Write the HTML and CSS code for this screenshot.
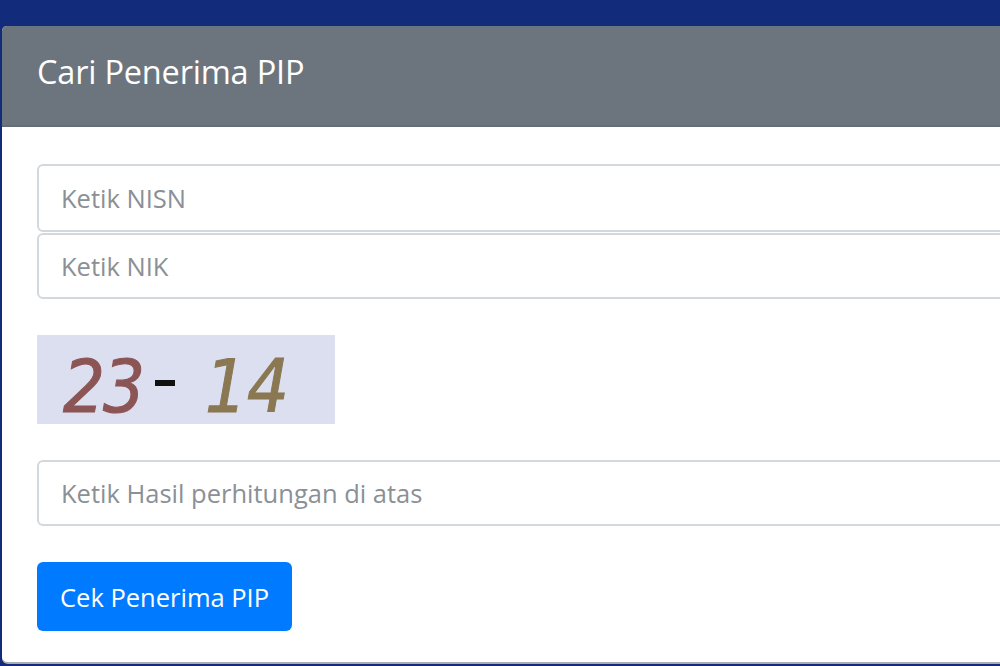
FILE: index.html
```html
<!DOCTYPE html>
<html lang="id">
<head>
  <meta charset="UTF-8" />
  <meta name="viewport" content="width=device-width, initial-scale=1.0" />
  <title>Cari Penerima PIP</title>
  <link rel="stylesheet" href="styles.css">
</head>
<body>

  <div class="topbar"></div>

  <div class="card">
    <div class="card-header">
      <h3>Cari Penerima PIP</h3>
    </div>

    <div class="card-body">
      <form class="search-form" onsubmit="return false;">
        <div class="field-group">
          <input type="text" class="form-control" placeholder="Ketik NISN">
          <input type="text" class="form-control" placeholder="Ketik NIK">
        </div>

        <div class="captcha">
          <span class="num num-a">23</span>
          <span class="minus"></span>
          <span class="num num-b">14</span>
        </div>

        <input type="text" class="form-control" placeholder="Ketik Hasil perhitungan di atas">

        <div>
          <button type="submit" class="btn-primary">Cek Penerima PIP</button>
        </div>
      </form>
    </div>
  </div>

</body>
</html>
```

FILE: styles.css
```css
html, body {
  height: 100%;
}

body {
  margin: 0;
  overflow: hidden;
  background: #132b7b;
  font-family: 'Open Sans', 'Lato', sans-serif;
  color: #212529;
}

.topbar {
  height: 26px;
  background: #132b7b;
}

.card {
  margin-left: 2px;
  height: 638px;
  box-sizing: border-box;
  background: #fff;
  border-bottom: 2px solid #a9adb3;
  border-radius: 5px 0 0 6px;
  overflow: hidden;
  display: flex;
  flex-direction: column;
}

.card-header {
  height: 101px;
  box-sizing: border-box;
  background: #6c757d;
  border-bottom: 2px solid #656c74;
  padding-left: 35px;
  display: flex;
  align-items: center;
}

.card-header h3 {
  margin: 0;
  color: #fff;
  font-weight: 400;
  font-size: 32.5px;
  letter-spacing: -0.2px;
  padding-bottom: 8px;
}

.card-body {
  padding: 37px 0 0 35px;
}

.search-form {
  display: flex;
  flex-direction: column;
  gap: 36px;
}

.field-group {
  display: flex;
  flex-direction: column;
  gap: 1px;
}

.form-control {
  display: block;
  width: calc(100% + 40px);
  height: 66px;
  box-sizing: border-box;
  padding: 0 22px;
  border: 2px solid #d3d8dd;
  border-radius: 6px;
  font-family: inherit;
  font-size: 25.5px;
  color: #495057;
  background: #fff;
}

.field-group .form-control:first-child {
  height: 68px;
}

.form-control::placeholder {
  color: #8a9096;
}

.captcha {
  width: 298px;
  height: 89px;
  background: #dcdff0;
  display: flex;
  align-items: center;
  padding-left: 26px;
  box-sizing: border-box;
  font-family: 'DejaVu Sans', sans-serif;
  font-style: italic;
}

.num {
  font-size: 66px;
  line-height: 1;
  display: inline-block;
  transform: scaleY(1.1);
  padding-top: 14px;
  -webkit-text-stroke: 1px currentColor;
}

.num-a {
  color: #8c5555;
  letter-spacing: -2px;
}

.num-b {
  color: #8a7852;
  margin-left: 30px;
}

.minus {
  display: inline-block;
  width: 20px;
  height: 6px;
  background: #111;
  margin-left: 12px;
  margin-top: 6px;
}

.btn-primary {
  height: 69px;
  padding: 0 23px;
  border: none;
  border-radius: 6px;
  background: #007bff;
  color: #fff;
  font-family: inherit;
  font-size: 25.5px;
  cursor: pointer;
}
```
